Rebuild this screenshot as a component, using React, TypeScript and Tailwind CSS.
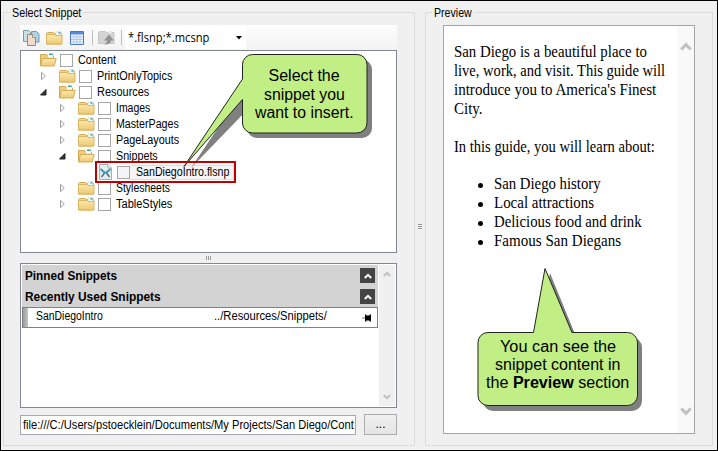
import { useLayoutEffect, useRef, type ReactNode } from "react";

type FitProps = { w: number; className?: string; children: ReactNode };

// Text squeezed horizontally to a given width, like the condensed system UI font.
function Fit({ w, className = "", children }: FitProps) {
  const ref = useRef<HTMLSpanElement>(null);
  useLayoutEffect(() => {
    const el = ref.current;
    if (el) el.style.transform = `scaleX(${w / el.offsetWidth})`;
  }, [w]);
  return (
    <span className="block shrink-0" style={{ width: w }}>
      <span ref={ref} className={`inline-block origin-left whitespace-pre ${className}`}>
        {children}
      </span>
    </span>
  );
}

function Folder({ open = false }: { open?: boolean }) {
  return (
    <svg width="17" height="14" viewBox="0 0 17 14" className="shrink-0">
      <defs>
        <linearGradient id="fold" x1="0" y1="0" x2="0" y2="1">
          <stop offset="0" stopColor="#fbe9b0" />
          <stop offset="1" stopColor="#eec871" />
        </linearGradient>
      </defs>
      {open ? (
        <>
          <path d="M.5 12.5V1.500h6l1 1.500h6v9.500z" fill="#edcf82" stroke="#d0a850" />
          <path d="M8 1h5v3.500H8z" fill="#fff" />
          <path d="M9 .5h2v1.500H9z" fill="#46a846" />
          <path d="M11 .5h2v1.500h-2z" fill="#35b5e8" />
          <path d="M2.500 5.500h13.700l-2 7.500H.6z" fill="url(#fold)" stroke="#d3ad58" />
        </>
      ) : (
        <>
          <path d="M.5 13V2.500L1.500 1.500h6l1 1h7V13z" fill="#f3d78f" stroke="#d3ab54" />
          <path d="M10 .8h5v3.500h-5z" fill="#fff" stroke="#dfc074" strokeWidth=".5" />
          <path d="M12.500 1h2v1.800h-2z" fill="#35b5e8" />
          <path d="M.5 13V3.500h8l1.500 1h6V13z" fill="url(#fold)" stroke="#d9b562" />
        </>
      )}
    </svg>
  );
}

function SnippetFile() {
  return (
    <svg width="13" height="16" viewBox="0 0 13 16" className="mx-[2px] shrink-0">
      <path d="M.5 .5h8.500l3.500 3.500v11.500H.5z" fill="#e4eef0" stroke="#a3afb2" />
      <path d="M9 .5V4h3.500" fill="#fff" stroke="#a3afb2" />
      <path d="M1.500 5l4 3.500M11.500 5l-4 3.500M5 8.500h3" fill="none" stroke="#3c9dc3" strokeWidth="2.200" />
      <path d="M5.500 9L2.500 13M7.500 9l3 4" stroke="#58757f" strokeWidth="1.600" />
    </svg>
  );
}

function Arrow({ open }: { open: boolean }) {
  return (
    <svg width="19" height="10" viewBox="0 0 19 10" className="shrink-0">
      {open ? (
        <path d="M6 2.500V8H.5z" fill="#333" stroke="#222" />
      ) : (
        <path d="M1.500 1.300v7.400L5.300 5z" fill="#fff" stroke="#a0a0a0" />
      )}
    </svg>
  );
}

type Node = { level: number; open?: boolean; root?: boolean; file?: boolean; label: string; w: number };

const nodes: Node[] = [
  { level: 0, root: true, open: true, label: "Content", w: 38 },
  { level: 1, label: "PrintOnlyTopics", w: 75 },
  { level: 1, open: true, label: "Resources", w: 52 },
  { level: 2, label: "Images", w: 34 },
  { level: 2, label: "MasterPages", w: 63 },
  { level: 2, label: "PageLayouts", w: 63 },
  { level: 2, open: true, label: "Snippets", w: 42 },
  { level: 3, file: true, label: "SanDiegoIntro.flsnp", w: 93 },
  { level: 2, label: "Stylesheets", w: 54 },
  { level: 2, label: "TableStyles", w: 56 },
];

const indents = ["pl-0", "pl-[19px]", "pl-[38px]", "pl-[57px]"];

function TreeRow({ node }: { node: Node }) {
  return (
    <li className={`flex h-4 items-center ${indents[node.level]}`}>
      {node.root || node.file ? <span className="w-[19px] shrink-0" /> : <Arrow open={!!node.open} />}
      {node.file ? <SnippetFile /> : <Folder open={node.open} />}
      <span className={`ml-[3px] size-[13px] shrink-0 border border-[#a6a6a6] ${node.file ? "bg-[#f5f5f5]" : "bg-white"}`} />
      <span className={node.file ? "flex h-[15px] items-center border border-l-0 border-[#dedede] bg-[#f5f5f5] pl-[6px] pr-1" : "pl-[5px]"}>
        <Fit w={node.w}>{node.label}</Fit>
      </span>
    </li>
  );
}

function Toolbar() {
  return (
    <div className="flex h-[25px] items-center bg-linear-to-b from-[#fdfdfd] to-[#f3f3f3]">
      <svg width="17" height="17" viewBox="0 0 17 17" className="ml-[3px]">
        <path d="M.5 1.500h5l2 2v9h-7z" fill="#c9dfe2" stroke="#779da8" />
        <path d="M8.500 2.500h5l2.500 2.500v8H8.500z" fill="#a9d4ea" stroke="#6b9cb8" />
        <path d="M4.500 5.500h5l3 3v8h-8z" fill="#efdccf" stroke="#a28472" />
        <path d="M9.500 5.500v3h3" fill="#fff" stroke="#a28472" />
      </svg>
      <div className="ml-[6px]"><Folder /></div>
      <svg width="14" height="14" viewBox="0 0 14 14" className="ml-[7px]">
        <path d="M.5 .5h13v13H.5z" fill="#f4f9ff" stroke="#4a78c8" />
        <path d="M1 1h12v2.500H1z" fill="#5b87dc" />
        <path d="M1 6h12M1 8.500h12M1 11h12M4 3.500V13M7 3.500V13M10 3.500V13" stroke="#a9c6f2" />
      </svg>
      <span className="ml-[8px] h-[15px] w-px bg-[#bdbdbd]" />
      <svg width="17" height="15" viewBox="0 0 17 15" className="ml-[5px]">
        <path d="M.5 13.500V2.500L1.500 1.500h6l1 1h7.500v11z" fill="#d4d4d4" stroke="#c6c6c6" />
        <path d="M10 1h4v2h-4z" fill="#eee" />
        <path d="M4 14.500c4 0 5-1.500 5-4H6L11 4.500l5 6h-3c0 3-3 4.500-9 4z" fill="#939393" />
      </svg>
      <span className="ml-[6px] h-[15px] w-px bg-[#bdbdbd]" />
      <div className="ml-[3px] flex h-[23px] w-[121px] items-center bg-white pl-[3px]">
        <Fit w={81} className="font-['Open_Sans',sans-serif] text-[12px] leading-4">*.flsnp;*.mcsnp</Fit>
        <svg width="6" height="4" viewBox="0 0 6 4" className="ml-[27px]"><path d="M0 0h6L3 3.500z" /></svg>
      </div>
    </div>
  );
}

function Chevron({ down = false, size = 8, color = "#c1c1c1" }: { down?: boolean; size?: number; color?: string }) {
  return (
    <svg width={size} height={size * 0.75} viewBox="0 0 8 6" className={`shrink-0 ${down ? "rotate-180" : ""}`}>
      <path d="M.8 5L4 1.800 7.200 5" fill="none" stroke={color} strokeWidth="2" />
    </svg>
  );
}

function SectionHead({ title, w }: { title: string; w: number }) {
  return (
    <div className="flex h-[21px] items-center justify-between bg-[#d3d3d3] pl-[3px] pr-[3px]">
      <Fit w={w} className="text-[12px] font-bold">{title}</Fit>
      <span className="flex size-[15px] items-center justify-center bg-[#444]">
        <Chevron color="#fff" />
      </span>
    </div>
  );
}

function Recent() {
  return (
    <div className="flex h-[145px] border border-[#828790] bg-white p-px">
      <div className="w-[356px]">
        <SectionHead title="Pinned Snippets" w={92} />
        <SectionHead title="Recently Used Snippets" w={136} />
        <div className="flex h-[21px] items-start border border-[#808080]">
          <span className="h-full w-[5px] bg-linear-to-r from-[#9b9b9b] to-[#c4c4c4]" />
          <div className="ml-2 mt-px w-[178px]"><Fit w={67}>SanDiegoIntro</Fit></div>
          <div className="mt-px"><Fit w={113}>../Resources/Snippets/</Fit></div>
          <svg width="10" height="8" viewBox="0 0 10 8" className="ml-[35px] mt-[6px]">
            <path d="M0 4h3.500" stroke="#777" />
            <path d="M3 .5h1.300v1h3.200V.5H9v7H7.500v-1H4.300v1H3z" />
          </svg>
        </div>
      </div>
      <div className="ml-px flex flex-1 flex-col items-center justify-between bg-[#f0f0f0] pb-[6px] pt-[6px]">
        <Chevron />
        <Chevron down />
      </div>
    </div>
  );
}

function Group({ title, tw, className, children }: { title: string; tw: number; className: string; children: ReactNode }) {
  return (
    <section className={`relative h-[434px] border border-[#dcdcdc] ${className}`}>
      <h2 className="absolute -top-[7px] left-[6px] bg-[#f0f0f0] px-[2px]"><Fit w={tw}>{title}</Fit></h2>
      {children}
    </section>
  );
}

function Callouts() {
  return (
    <svg width="718" height="451" viewBox="0 0 718 451" className="pointer-events-none absolute -left-px -top-px">
      <g fill="#808080">
        <rect x="247" y="59.500" width="125" height="78.500" rx="10" />
        <path d="M248 83L191 168l57-59z" />
        <rect x="483" y="337.500" width="159" height="73.500" rx="10" />
        <path d="M550 273l-12 66h39z" />
      </g>
      <g fill="#c1ee85" stroke="#222" strokeWidth="1">
        <path d="M252.500 54.500H357a10 10 0 0 1 10 10V123a10 10 0 0 1-10 10H252.500a10 10 0 0 1-10-10V99.500L184 166.500l58.500-87.500V64.500a10 10 0 0 1 10-10z" />
        <path d="M488 332.500h45.500L545 268.500l27 64h55.500a10 10 0 0 1 10 10v53a10 10 0 0 1-10 10H488a10 10 0 0 1-10-10v-53a10 10 0 0 1 10-10z" />
      </g>
    </svg>
  );
}

export default function App() {
  return (
    <main className="relative flex h-[451px] w-[718px] gap-[10px] overflow-hidden border border-black bg-[#f0f0f0] pl-[2px] pt-[11px] font-['Liberation_Sans',Arial,sans-serif] text-[12px] leading-[14px] text-black">
      <Group title="Select Snippet" tw={69} className="w-[412px] pl-4 pt-3">
        <div className="flex w-[377px] flex-col">
          <Toolbar />
          <ul className="h-[203px] border border-[#828790] bg-white pt-px">
            {nodes.map((n) => <TreeRow key={n.label} node={n} />)}
          </ul>
          <div className="flex h-[10px] items-center justify-center gap-px">
            <i className="h-1 w-px bg-[#999]" /><i className="h-1 w-px bg-[#999]" /><i className="h-1 w-px bg-[#999]" />
          </div>
          <Recent />
          <div className="mt-[6px] flex h-[21px] items-end justify-between">
            <div className="flex h-5 w-[336px] items-center border border-[#a5a8ad] bg-white pl-[2px]">
              <Fit w={331}>file:///C:/Users/pstoecklein/Documents/My Projects/San Diego/Cont</Fit>
            </div>
            <button className="h-[21px] w-[33px] border border-[#acacac] bg-linear-to-b from-[#efefef] to-[#e5e5e5] text-center leading-[17px]">...</button>
          </div>
        </div>
      </Group>

      <Group title="Preview" tw={38} className="w-[288px] pl-[17px] pt-3">
        <div className="flex h-[409px] w-[252px] border border-[#a5a5a5] bg-white">
          <article className="flex-1 pl-[10px] pt-[16px] font-['Liberation_Serif','Times_New_Roman',serif] text-[16px] leading-[19px]">
            <p>
              <Fit w={193}>San Diego is a beautiful place to</Fit>
              <Fit w={211}>live, work, and visit. This guide will</Fit>
              <Fit w={202}>introduce you to America's Finest</Fit>
              <Fit w={29}>City.</Fit>
            </p>
            <p className="mt-[19px]"><Fit w={201}>In this guide, you will learn about:</Fit></p>
            <ul className="mt-[18px]">
              {([["San Diego history", 107], ["Local attractions", 100], ["Delicious food and drink", 148], ["Famous San Diegans", 127]] as const).map(([t, w]) => (
                <li key={t} className="flex items-center pl-[24px]">
                  <span className="mr-[11px] mt-[3px] size-[5px] rounded-full bg-black" />
                  <Fit w={w}>{t}</Fit>
                </li>
              ))}
            </ul>
          </article>
          <div className="flex w-[17px] flex-col items-center justify-between bg-[#f9f9f9] pb-[17px] pt-[16px]">
            <Chevron size={12} />
            <Chevron size={12} down />
          </div>
        </div>
      </Group>

      <div className="absolute left-[417px] top-[223px] flex flex-col gap-px">
        <i className="h-px w-1 bg-[#999]" /><i className="h-px w-1 bg-[#999]" /><i className="h-px w-1 bg-[#999]" />
      </div>

      <Callouts />
      <div className="absolute left-[94px] top-[160px] h-[22px] w-[141px] border-2 border-[#c00000]" />
      <div className="absolute left-[241px] top-[66px] flex w-[124px] flex-col items-center text-[16px] leading-[18.500px]">
        <Fit w={71}>Select the</Fit>
        <Fit w={81}>snippet you</Fit>
        <Fit w={99}>want to insert.</Fit>
      </div>
      <div className="absolute left-[477px] top-[337px] flex w-[159px] flex-col items-center text-[16px] leading-[18px]">
        <Fit w={116}>You can see the</Fit>
        <Fit w={125}>snippet content in</Fit>
        <Fit w={143}>the <b>Preview</b> section</Fit>
      </div>
    </main>
  );
}
